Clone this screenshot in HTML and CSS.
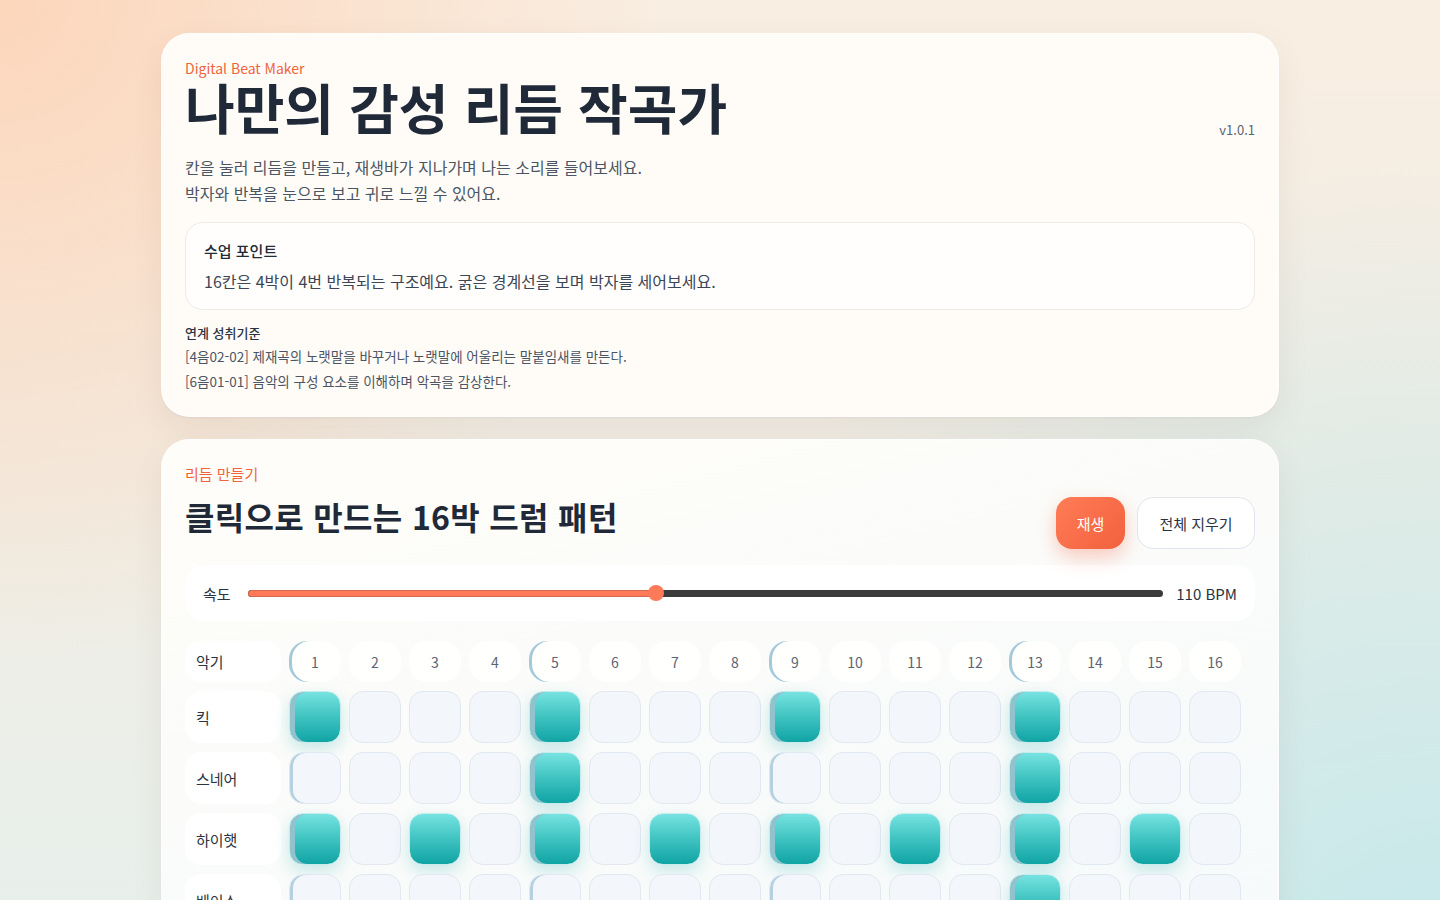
FILE: index.html
```html
<!DOCTYPE html>
<html lang="ko">
<head>
<meta charset="utf-8">
<title>나만의 감성 리듬 작곡가</title>
<link rel="stylesheet" href="styles.css">
</head>
<body>
<main class="page">
  <section class="card intro">
    <p class="eyebrow">Digital Beat Maker</p>
    <div class="title-row">
      <h1 class="title">나만의 감성 리듬 작곡가</h1>
      <span class="version">v1.0.1</span>
    </div>
    <p class="desc">칸을 눌러 리듬을 만들고, 재생바가 지나가며 나는 소리를 들어보세요.<br>박자와 반복을 눈으로 보고 귀로 느낄 수 있어요.</p>
    <div class="lesson">
      <h2 class="lesson-title">수업 포인트</h2>
      <p class="lesson-body">16칸은 4박이 4번 반복되는 구조예요. 굵은 경계선을 보며 박자를 세어보세요.</p>
    </div>
    <div class="standards">
      <h3 class="std-title">연계 성취기준</h3>
      <p class="std-line">[4음02-02] 제재곡의 노랫말을 바꾸거나 노랫말에 어울리는 말붙임새를 만든다.</p>
      <p class="std-line">[6음01-01] 음악의 구성 요소를 이해하며 악곡을 감상한다.</p>
    </div>
  </section>

  <section class="card maker">
    <p class="eyebrow eyebrow-lg">리듬 만들기</p>
    <div class="maker-head">
      <h2 class="maker-title">클릭으로 만드는 16박 드럼 패턴</h2>
      <div class="actions">
        <button class="btn btn-play">재생</button>
        <button class="btn btn-clear">전체 지우기</button>
      </div>
    </div>
    <div class="tempo">
      <span class="tempo-label">속도</span>
      <div class="slider">
        <div class="slider-fill" style="width:44.55%"></div>
        <div class="slider-thumb" style="left:44.55%"></div>
      </div>
      <span class="tempo-value">110 BPM</span>
    </div>

    <div class="grid">
      <div class="label">악기</div>
      <div class="num beat">1</div><div class="num">2</div><div class="num">3</div><div class="num">4</div>
      <div class="num beat">5</div><div class="num">6</div><div class="num">7</div><div class="num">8</div>
      <div class="num beat">9</div><div class="num">10</div><div class="num">11</div><div class="num">12</div>
      <div class="num beat">13</div><div class="num">14</div><div class="num">15</div><div class="num">16</div>

      <div class="label row-label">킥</div>
      <div class="cell beat on"></div><div class="cell"></div><div class="cell"></div><div class="cell"></div>
      <div class="cell beat on"></div><div class="cell"></div><div class="cell"></div><div class="cell"></div>
      <div class="cell beat on"></div><div class="cell"></div><div class="cell"></div><div class="cell"></div>
      <div class="cell beat on"></div><div class="cell"></div><div class="cell"></div><div class="cell"></div>

      <div class="label row-label">스네어</div>
      <div class="cell beat"></div><div class="cell"></div><div class="cell"></div><div class="cell"></div>
      <div class="cell beat on"></div><div class="cell"></div><div class="cell"></div><div class="cell"></div>
      <div class="cell beat"></div><div class="cell"></div><div class="cell"></div><div class="cell"></div>
      <div class="cell beat on"></div><div class="cell"></div><div class="cell"></div><div class="cell"></div>

      <div class="label row-label">하이햇</div>
      <div class="cell beat on"></div><div class="cell"></div><div class="cell on"></div><div class="cell"></div>
      <div class="cell beat on"></div><div class="cell"></div><div class="cell on"></div><div class="cell"></div>
      <div class="cell beat on"></div><div class="cell"></div><div class="cell on"></div><div class="cell"></div>
      <div class="cell beat on"></div><div class="cell"></div><div class="cell on"></div><div class="cell"></div>

      <div class="label row-label">베이스</div>
      <div class="cell beat"></div><div class="cell"></div><div class="cell"></div><div class="cell"></div>
      <div class="cell beat"></div><div class="cell"></div><div class="cell"></div><div class="cell"></div>
      <div class="cell beat"></div><div class="cell"></div><div class="cell"></div><div class="cell"></div>
      <div class="cell beat on"></div><div class="cell"></div><div class="cell"></div><div class="cell"></div>
    </div>
  </section>
</main>
</body>
</html>
```

FILE: styles.css
```css
* { box-sizing: border-box; }

html, body { margin: 0; padding: 0; }

body {
  font-family: "Noto Sans CJK KR", "Noto Sans", sans-serif;
  color: #1f2a37;
  min-height: 100vh;
  background:
    radial-gradient(circle at 0% 0%, #fcd6bb 0%, rgba(252, 214, 187, 0) 38%),
    radial-gradient(circle at 100% 100%, #c6e8ea 0%, rgba(198, 232, 234, 0) 48%),
    linear-gradient(180deg, #f9eee2 0%, #f1ede4 48%, #e6f0ec 100%);
}

.page {
  width: 1118px;
  margin: 0 auto;
  padding: 33px 0 40px;
  display: flex;
  flex-direction: column;
  gap: 22px;
}

.card {
  border-radius: 28px;
  padding: 23px;
  border: 1px solid rgba(255, 255, 255, 0.75);
  box-shadow: 0 12px 32px rgba(90, 70, 50, 0.08), 0 1px 2px rgba(0, 0, 0, 0.04);
}

.intro {
  background: #fffcf8;
  padding-top: 24px;
  padding-bottom: 22px;
}

.maker {
  background: linear-gradient(165deg, #fffdf9 0%, #fbfcfa 40%, #f6fafb 100%);
  padding-top: 23px;
}

p, h1, h2, h3 { margin: 0; }

.eyebrow {
  font-size: 14px;
  line-height: 20px;
  color: #f0643c;
}

.eyebrow-lg {
  font-size: 15px;
  line-height: 22px;
}

.title-row {
  display: flex;
  justify-content: space-between;
  align-items: flex-end;
}

.title {
  font-size: 54px;
  line-height: 57px;
  font-weight: 700;
  letter-spacing: 0;
  color: #1f2937;
}

.version {
  font-size: 13px;
  line-height: 18px;
  color: #5b6472;
  margin-bottom: -4px;
}

.desc {
  margin-top: 19px;
  font-size: 16px;
  line-height: 26px;
  color: #4b5563;
}

.lesson {
  margin-top: 16px;
  border: 1px solid #eeeae4;
  border-radius: 18px;
  background: #fffefc;
  padding: 17px 18px;
  display: flex;
  flex-direction: column;
  gap: 8px;
}

.lesson-title {
  font-size: 15px;
  line-height: 22px;
  font-weight: 500;
  color: #222b36;
}

.lesson-body {
  font-size: 16px;
  line-height: 22px;
  color: #3d4654;
}

.standards {
  margin-top: 13px;
}

.std-title {
  font-size: 13px;
  line-height: 20px;
  font-weight: 500;
  color: #2b3340;
}

.std-line {
  font-size: 13.5px;
  line-height: 25px;
  color: #4b5563;
}

.std-title + .std-line { margin-top: 1px; }

.maker-head {
  margin-top: 12px;
  display: flex;
  justify-content: space-between;
  align-items: flex-start;
}

.maker-title {
  margin-top: -1px;
  font-size: 32px;
  line-height: 40px;
  font-weight: 700;
  letter-spacing: 0.01em;
  color: #1f2937;
}

.actions {
  display: flex;
  gap: 12px;
}

.btn {
  font-family: inherit;
  font-size: 15px;
  height: 52px;
  border-radius: 16px;
  cursor: pointer;
}

.btn-play {
  width: 69px;
  border: none;
  color: #ffffff;
  background: linear-gradient(135deg, #ff7d57 0%, #f2603d 100%);
  box-shadow: 0 8px 20px rgba(242, 96, 61, 0.32);
}

.btn-clear {
  width: 118px;
  background: #ffffff;
  border: 1px solid #e2e6ec;
  color: #2b3340;
}

.tempo {
  margin-top: 16px;
  height: 56px;
  border-radius: 20px;
  background: rgba(255, 255, 255, 0.92);
  display: flex;
  align-items: center;
  padding: 0 18px;
  gap: 14px;
}

.tempo-label {
  font-size: 15px;
  color: #2b3340;
  width: 31px;
}

.slider {
  position: relative;
  flex: 1;
  height: 7px;
  border-radius: 4px;
  background: #3b3b3b;
}

.slider-fill {
  height: 100%;
  border-radius: 4px 0 0 4px;
  background: #ff7a59;
  box-shadow: inset 0 0 0 1px rgba(120, 80, 70, 0.35);
}

.slider-thumb {
  position: absolute;
  top: 50%;
  width: 16px;
  height: 16px;
  margin-left: -8px;
  margin-top: -8px;
  border-radius: 50%;
  background: #ff7a59;
}

.tempo-value {
  font-size: 15px;
  color: #2b3340;
  margin-left: -1px;
}

.grid {
  margin-top: 20px;
  display: grid;
  grid-template-columns: 96px repeat(16, 52px);
  grid-template-rows: 41px;
  grid-auto-rows: 52px;
  column-gap: 8px;
  row-gap: 9px;
}

.label {
  background: #ffffff;
  border-radius: 16px;
  padding-left: 11px;
  display: flex;
  align-items: center;
  font-size: 15px;
  color: #2b3340;
}

.num {
  background: #fffffd;
  border-radius: 18px;
  display: flex;
  align-items: center;
  justify-content: center;
  font-size: 14px;
  color: #5b6472;
}

.num.beat {
  box-shadow: inset 3px 0 0 #a3c9da;
}

.cell {
  border-radius: 14px;
  background: #f3f6fb;
  border: 1px solid #e2e8f0;
}

.cell.beat {
  box-shadow: inset 3px 0 0 #b3d1df;
}

.cell.on {
  background: linear-gradient(180deg, #76e3e1 0%, #3fc3c1 50%, #10a4a4 100%);
  border: 1px solid #c6ecec;
  box-shadow: 0 6px 16px rgba(19, 166, 166, 0.22);
}

.cell.beat.on {
  box-shadow: inset 5px 0 0 #93c2cf, 0 6px 16px rgba(19, 166, 166, 0.22);
}
```
